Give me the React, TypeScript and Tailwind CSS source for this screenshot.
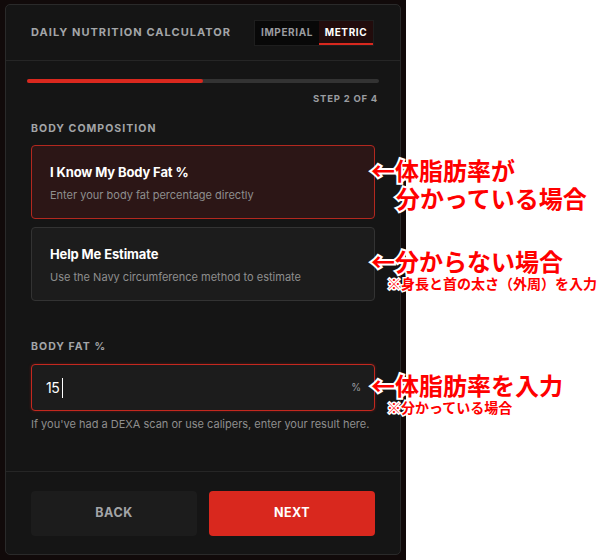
import { useState } from "react";

const ui = "font-['Inter','Liberation_Sans',sans-serif]";
const jp = "font-['Noto_Sans_CJK_JP',sans-serif]";
const ink = "font-bold text-[#ff0000] [paint-order:stroke_fill] whitespace-nowrap";

function Choice({ title, desc, active, onClick }: { title: string; desc: string; active: boolean; onClick: () => void }) {
	return (
		<div
			onClick={onClick}
			className={`h-[74px] rounded-[4px] border px-[18px] pt-[17px] cursor-pointer ${active ? "bg-[#2c1616] border-[#b3281f]" : "bg-[#1c1c1c] border-[#333333]"}`}
		>
			<p className="text-[13px] font-bold text-white leading-[18px] tracking-[-0.01em]">{title}</p>
			<p className="mt-[6px] text-[11px] text-[#8e8e8e] leading-[16px]">{desc}</p>
		</div>
	);
}

export default function App() {
	const [unit, setUnit] = useState<"imperial" | "metric">("metric");
	const [mode, setMode] = useState<"know" | "estimate">("know");
	const [bodyFat, setBodyFat] = useState("15");

	return (
		<div className={`relative w-[597px] h-[560px] bg-white ${ui}`}>
			<div className="w-[406px] h-[560px] bg-[#110a0a] pt-[4px] pl-[5px]">
				<div className="w-[396px] h-[551px] bg-[#151515] border border-[#2a2a2a] rounded-[5px] flex flex-col">
					{/* Header */}
					<div className="h-[56px] border-b border-[#262626] flex items-center justify-between pl-[25px] pr-[26px]">
						<h1 className="text-[11px] font-bold tracking-[0.095em] text-[#a3a5a8]">DAILY NUTRITION CALCULATOR</h1>
						<div className="flex h-[26px] border border-[#1e1e1e] bg-[#080808] mt-[1px]">
							<button
								onClick={() => setUnit("imperial")}
								className={`w-[64px] text-[10px] font-bold tracking-[0.06em] border-b-2 ${unit === "imperial" ? "bg-[#220c0c] text-white border-[#d9281e]" : "text-[#9a9ca0] border-transparent"}`}
							>
								IMPERIAL
							</button>
							<button
								onClick={() => setUnit("metric")}
								className={`w-[54px] text-[10px] font-bold tracking-[0.06em] border-b-2 ${unit === "metric" ? "bg-[#220c0c] text-white border-[#d9281e]" : "text-[#9a9ca0] border-transparent"}`}
							>
								METRIC
							</button>
						</div>
					</div>

					{/* Body */}
					<div className="flex-1 px-[25px] pt-[18px]">
						<div className="-mx-[4px]">
							<div className="h-[4px] rounded-full bg-[#333333]">
								<div className="h-full w-1/2 rounded-full bg-[#d9281e]" />
							</div>
							<p className="mt-[9px] text-right text-[9.5px] font-bold tracking-[0.08em] text-[#9a9ca0] pr-[1px]">STEP 2 OF 4</p>
						</div>

						<h2 className="mt-[16px] text-[10.5px] font-bold tracking-[0.1em] text-[#a3a5a8] leading-[14px]">BODY COMPOSITION</h2>

						<div className="mt-[9px] flex flex-col gap-[8px]">
							<Choice title="I Know My Body Fat %" desc="Enter your body fat percentage directly" active={mode === "know"} onClick={() => setMode("know")} />
							<Choice title="Help Me Estimate" desc="Use the Navy circumference method to estimate" active={mode === "estimate"} onClick={() => setMode("estimate")} />
						</div>

						<h2 className="mt-[39px] text-[10.5px] font-bold tracking-[0.1em] text-[#a3a5a8] leading-[14px]">BODY FAT %</h2>

						<div className="mt-[10px] h-[47px] rounded-[4px] border border-[#c4281f] bg-[#1c1c1c] flex items-center pl-[14px] pr-[13px] shadow-[0_0_3px_rgba(217,40,30,0.35)]">
							<input
								value={bodyFat}
								onChange={e => setBodyFat(e.target.value)}
								className="w-[16px] bg-transparent text-[14px] text-white outline-none tracking-[-0.04em]"
							/>
							<span className="w-px h-[20px] bg-white" />
							<span className="ml-auto text-[10px] text-[#9a9ca0]">%</span>
						</div>
						<p className="mt-[6px] text-[11px] text-[#8e8e8e] leading-[14px]">If you've had a DEXA scan or use calipers, enter your result here.</p>
					</div>

					{/* Footer */}
					<div className="border-t border-[#262626] px-[25px] pt-[19px] pb-[18px] flex gap-[12px]">
						<button className="flex-1 h-[45px] rounded-[4px] bg-[#1c1c1c] text-[12.5px] font-bold tracking-[0.04em] text-[#a3a5a8]">BACK</button>
						<button className="flex-1 h-[45px] rounded-[4px] bg-[#d9281e] text-[12.5px] font-bold tracking-[0.04em] text-white">NEXT</button>
					</div>
				</div>
			</div>

			{/* Annotations */}
			<p className={`${jp} ${ink} absolute left-[371px] top-[156px] text-[24px] leading-[28px] [-webkit-text-stroke:4px_#ffffff]`}>
				←体脂肪率が
				<br />
				<span className="pl-[25px]">分かっている場合</span>
			</p>
			<div className={`${jp} absolute left-[371px] top-[248px] flex flex-col gap-[1px]`}>
				<p className={`${ink} text-[24px] leading-[26px] [-webkit-text-stroke:4px_#ffffff]`}>←分からない場合</p>
				<p className={`${ink} text-[14px] leading-[16px] pl-[16px] [-webkit-text-stroke:3px_#ffffff]`}>※身長と首の太さ（外周）を入力</p>
			</div>
			<div className={`${jp} absolute left-[371px] top-[372px] flex flex-col gap-[1px]`}>
				<p className={`${ink} text-[24px] leading-[26px] [-webkit-text-stroke:4px_#ffffff]`}>←体脂肪率を入力</p>
				<p className={`${ink} text-[14px] leading-[16px] pl-[16px] [-webkit-text-stroke:3px_#ffffff]`}>※分かっている場合</p>
			</div>
		</div>
	);
}
